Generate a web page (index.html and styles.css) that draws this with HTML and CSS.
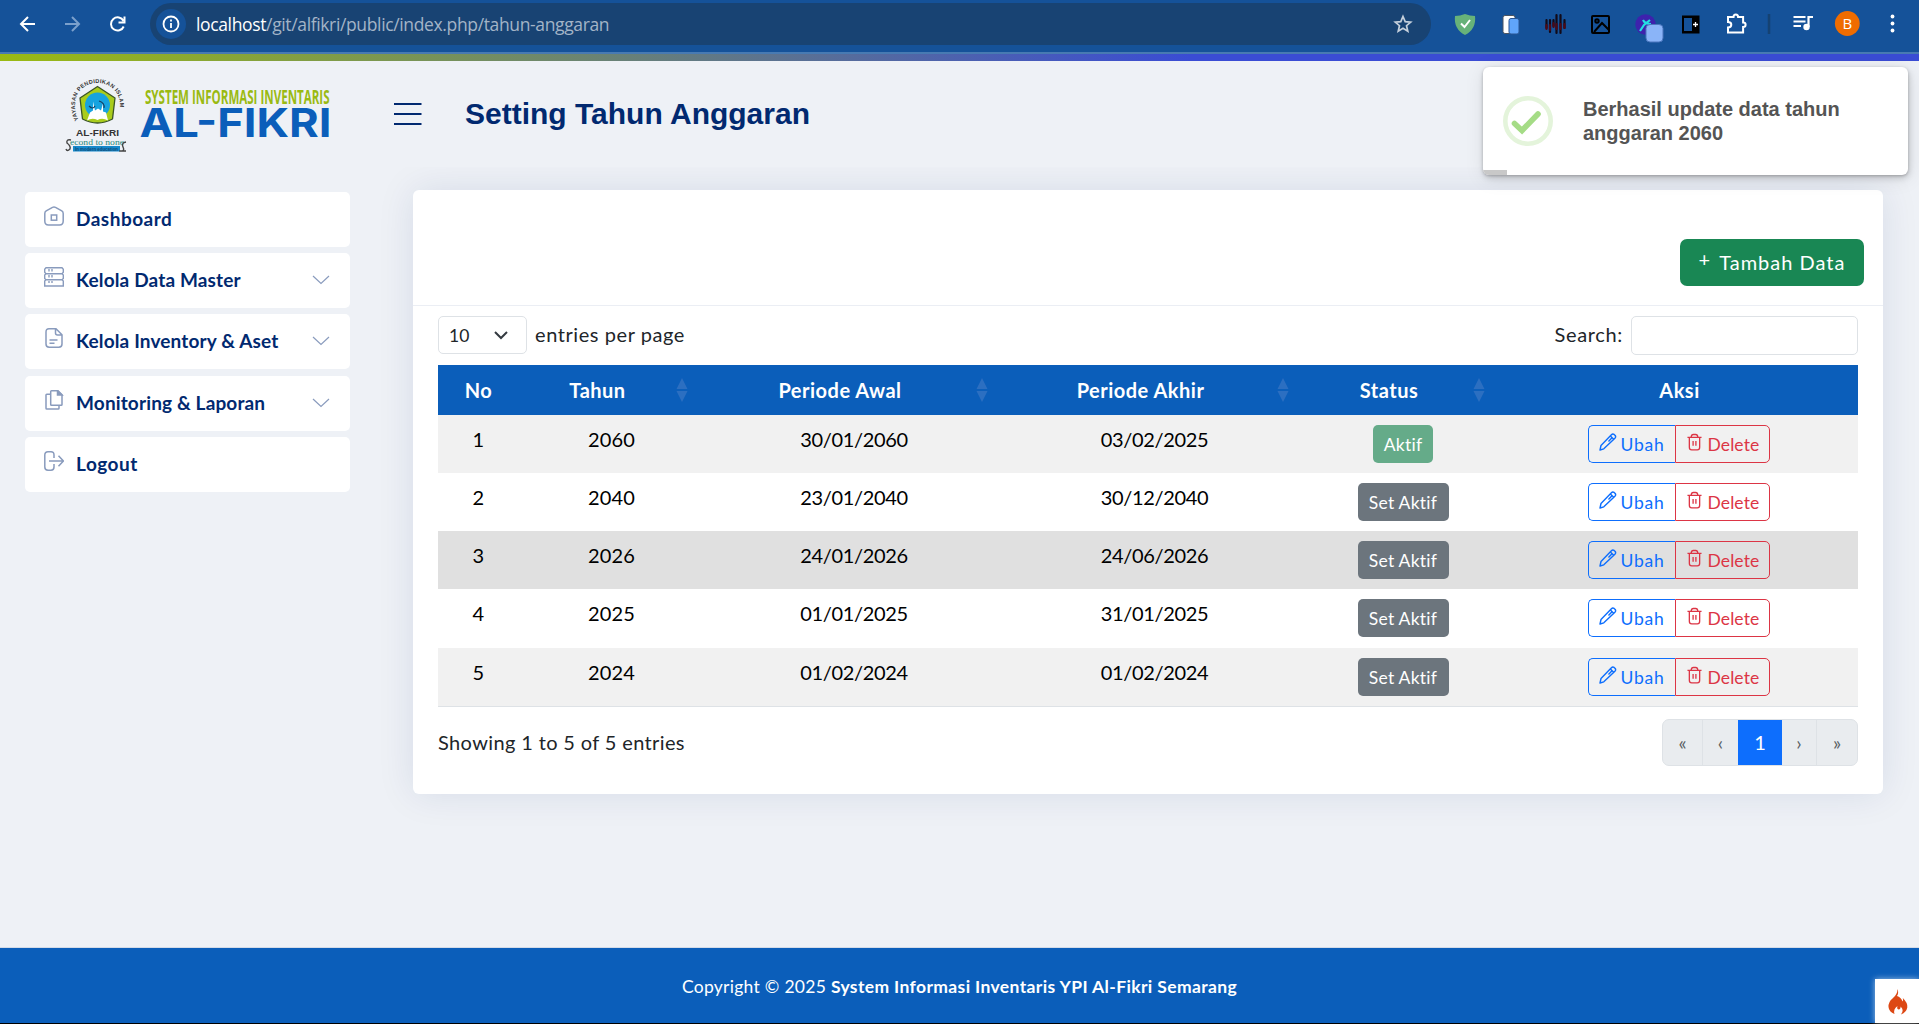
FILE: index.html
```html
<!DOCTYPE html>
<html lang="id">
<head>
<meta charset="utf-8">
<title>Setting Tahun Anggaran</title>
<link rel="stylesheet" href="styles.css">
</head>
<body>
<svg width="0" height="0" class="defs">
  <symbol id="pen" viewBox="0 0 18 18"><g fill="none" stroke="currentColor" stroke-width="1.4" stroke-linejoin="round"><path d="M12.400 1.700q1.300-1.300 2.700-.3l1.100 1.100q1 1.400-.3 2.700L4.800 15.800 1 17 2 12.500z"/><path d="M11.400 3.100 14.700 6.300M13.200 4.600 9.500 8.400"/></g></symbol>
  <symbol id="trash" viewBox="0 0 16 18"><g fill="none" stroke="currentColor" stroke-width="1.4"><path d="M.5 4h15M4.300 4q.4-3 2.500-3h2.400q2.100 0 2.500 3M2.500 4v10.500q0 2.800 2.500 2.800h6q2.500 0 2.500-2.800V4M6.500 8v5M9.500 8v5"/></g></symbol>
  <symbol id="chev" viewBox="0 0 18 10"><path d="M1 1l8 7.500L17 1" fill="none" stroke="currentColor" stroke-width="1.200"/></symbol>
  <symbol id="sort" viewBox="0 0 12 24"><path fill="currentColor" d="M6 0l5.500 11H.5zM6 24l5.500-11H.5z"/></symbol>
</svg>

<div class="browser">
  <svg class="nav" width="150" height="48" viewBox="0 0 150 48" fill="none" stroke="#fff" stroke-width="2">
    <path d="M35 24H21.500M28 17l-7 7 7 7"/>
    <path d="M65 24h13.500M72 17l7 7-7 7" stroke="#7ba0cc"/>
    <path d="M123.500 21a6.600 6.600 0 1 0 .2 5.500M124.500 16.500v6h-6"/>
  </svg>
  <div class="url">
    <span class="info"><svg width="18" height="18" viewBox="0 0 18 18" fill="none" stroke="#fff" stroke-width="1.800"><circle cx="9" cy="9" r="7.500"/><path d="M9 8v5M9 4.600v2"/></svg></span>
    <span class="address"><b>localhost</b>/git/alfikri/public/index.php/tahun-anggaran</span>
    <svg class="star" width="20" height="20" viewBox="0 0 20 20"><path d="M10 2.500l2.200 5.100 5.500.5-4.200 3.600 1.300 5.500-4.800-2.900-4.800 2.900 1.300-5.500L2.300 8.100l5.500-.5z" fill="none" stroke="#c5d0dc" stroke-width="1.700"/></svg>
  </div>
  <svg class="ext" width="488" height="48" viewBox="1431 0 488 48">
    <path d="M1465 14q5 2 10 2 1.500 13-10 19-11.500-6-10-19 5 0 10-2z" fill="#67b279"/>
    <path d="M1461 23.500l3.500 3.500 5.500-7" fill="none" stroke="#fff" stroke-width="2"/>
    <rect x="1503" y="15.500" width="12" height="18" rx="2" fill="#fff" stroke="#4d5560"/>
    <rect x="1509" y="18.500" width="10" height="15.500" rx="2" fill="#60a5fa" stroke="#285593"/>
    <g stroke-width="2.200" stroke-linecap="round"><path stroke="#120a18" d="M1546.500 20v8M1550 20v12M1553.500 20v6M1556.500 15v18M1560.500 15v18M1564.500 20v8"/><path stroke="#4b0918" d="M1546.500 25v4M1550 25v5M1553.500 23v4M1556.500 24v5M1560.500 24v5M1564.500 24v4"/></g>
    <g fill="none" stroke="#000" stroke-width="2"><rect x="1592" y="16" width="17" height="17" rx="1"/><circle cx="1597" cy="21" r="1.700"/><path d="M1594 32l8-9 7 7"/></g>
    <circle cx="1645.500" cy="24.500" r="10.200" fill="#3d22ad"/><path d="M1640 31l4-6 6-5M1643 20q2 4 8 4" stroke="#23dfe2" stroke-width="2.200" fill="none"/>
    <rect x="1646" y="24.500" width="17" height="17.500" rx="4" fill="#8ab4f8" stroke="#4a75bd"/>
    <path d="M1682 15.500h17.500v18H1682zM1684 18v13h8V18z" fill="#000" fill-rule="evenodd"/><path d="M1693 24.500h5M1695.500 22v5" stroke="#fff" stroke-width="1.300"/>
    <path d="M1728 17h5.500q0-2.500 2.300-2.500t2.300 2.500h5v5.500q2.500 0 2.500 2.200t-2.500 2.200v5.600H1728v-5q3.300 0 3.300-2.700t-3.300-2.700z" fill="none" stroke="#fff" stroke-width="2"/>
    <path d="M1769 14v20" stroke="#154272" stroke-width="2.500"/>
    <path d="M1793.500 17h12M1793.500 21.500h12M1793.500 26h7.500" stroke="#fff" stroke-width="2"/><path d="M1813 17h-4.500v10" stroke="#fff" stroke-width="2.200" fill="none"/><circle cx="1806.500" cy="27" r="3.200" fill="#fff"/>
    <circle cx="1847.300" cy="23.500" r="12.400" fill="#ef6c00"/><text x="1847.300" y="29" text-anchor="middle" fill="#fff" class="initial">B</text>
    <g fill="#fff"><circle cx="1892.500" cy="16.500" r="1.900"/><circle cx="1892.500" cy="23.500" r="1.900"/><circle cx="1892.500" cy="30.500" r="1.900"/></g>
  </svg>
</div>
<div class="stripe"></div>

<header class="header">
  <svg class="logo" width="280" height="80" viewBox="60 73 280 80">
    <defs><path id="arc" d="M78.500 119C69 99 80 82 97.500 82S126 99 116.500 119"/></defs>
    <text class="arc-text"><textPath href="#arc" textLength="88">YAYASAN PENDIDIKAN ISLAM</textPath></text>
    <path d="M97.500 85.500l17.500 11.500-2.500 21q-15 8-30 0L80 97z" fill="#a9cc1c" stroke="#3b5526" stroke-width="1.300" stroke-linejoin="round"/>
    <circle cx="97.500" cy="104" r="12.500" fill="#17a3df"/>
    <path d="M87 119.500q5-3 10.500-.5 5-2.500 10.500.5l-2-8-3-1v-8l-2 7-3-2-3 2-2-9v9l-3 2z" fill="#fff"/>
    <path d="M89 105q4 4 6 0M99 100q6 2 5 7" fill="none" stroke="#183e61" stroke-width="1.200"/>
    <text x="76" y="134.500" class="mark" textLength="43" lengthAdjust="spacingAndGlyphs">AL-FIKRI</text>
    <text x="70" y="144" class="motto" textLength="54" lengthAdjust="spacingAndGlyphs">econd to none</text>
    <rect x="73" y="145" width="47" height="5.500" fill="#168acb"/>
    <text x="75" y="149.500" class="tiny" textLength="43" lengthAdjust="spacingAndGlyphs">In modern education</text>
    <path d="M71 139q-5-1-4 3 4 3 3 6-3 3-4 0M126 141q-5 1-3 5t-2 4 5 0" stroke="#444" fill="none" stroke-width="1.400"/>
    <text x="145" y="102.500" class="sys" textLength="184.500" lengthAdjust="spacingAndGlyphs">SYSTEM INFORMASI INVENTARIS</text>
    <text x="139.500" y="136" class="brand" textLength="192" lengthAdjust="spacingAndGlyphs">AL-FIKRI</text>
  </svg>
  <svg class="burger" width="28" height="24" viewBox="0 0 28 24"><path d="M0 2h27.500M0 12h27.500M0 22h27.500" stroke="#012970" stroke-width="2"/></svg>
  <h1>Setting Tahun Anggaran</h1>
</header>

<div class="main">
  <nav class="sidebar">
    <a><svg width="20" height="20" viewBox="0 0 20 20" fill="none" stroke="currentColor" stroke-width="1.500"><path d="M.8 7.500q0-1.700 1.400-2.600L8.500 1.300q1.500-.8 3 0l6.300 3.600q1.400.9 1.400 2.600V15q0 4-3.700 4h-11Q.8 19 .8 15z"/><rect x="7.300" y="9" width="5.400" height="5.200"/></svg><span class="wide">Dashboard</span></a>
    <a><svg width="20" height="20" viewBox="0 0 20 20" fill="none" stroke="currentColor" stroke-width="1.400"><path d="M2 .8h16l1.300 1.500v3L18 6.700H2L.7 5.300v-3zM2 6.700.7 8v3.500L2 12.700h16l1.300-1.200V8L18 6.700M2 12.700.7 14v5h18.600v-5L18 12.700M5 2v2.500M8 2v2.500M5 8v2.500M8 8v2.500M5 14v2M8 14v2"/></svg><span>Kelola Data Master</span><svg class="chev" width="18" height="10"><use href="#chev"/></svg></a>
    <a><svg width="20" height="20" viewBox="0 0 20 20" fill="none" stroke="currentColor" stroke-width="1.500"><path d="M5 .8h7l6 6V16q0 3.200-3.200 3.200H5.200Q2 19.200 2 16V4Q2 .8 5 .8zM11.500.8V5q0 2 2 2H18M5.500 12h8M5.500 15.300h5"/></svg><span>Kelola Inventory &amp; Aset</span><svg class="chev" width="18" height="10"><use href="#chev"/></svg></a>
    <a><svg width="20" height="20" viewBox="0 0 20 20" fill="none" stroke="currentColor" stroke-width="1.500"><path d="M7.500.8H14l4 4V14.500q0 .8-.8.800H7.500q-.8 0-.8-.8V1.600q0-.8.800-.8zM6.500 4.300H2.800q-.8 0-.8.800v13.200q0 .8.800.8h11.400q.8 0 .8-.8v-3"/><path d="M13.500.8V5H18z" fill="currentColor"/></svg><span>Monitoring &amp; Laporan</span><svg class="chev" width="18" height="10"><use href="#chev"/></svg></a>
    <a><svg width="20" height="20" viewBox="0 0 20 20" fill="none" stroke="currentColor" stroke-width="1.500"><path d="M10 7V4q0-3.200-3-3.200H4Q.8.800.8 4v12q0 3.200 3.200 3.200h3q3 0 3-3.200v-3M5 10h14.300M14.500 4.800 19.400 10l-4.900 5.200"/></svg><span class="wide">Logout</span></a>
  </nav>

  <section class="card">
    <div class="card-head"><button class="add"><i>+</i>Tambah Data</button></div>
    <div class="tools">
      <span class="select">10<svg width="14" height="9" viewBox="0 0 14 9"><path d="M1 1l6 6 6-6" fill="none" stroke="#343a40" stroke-width="2"/></svg></span>
      <span class="per">entries per page</span>
      <span class="search-label">Search:</span><input class="search">
    </div>
    <table>
      <colgroup><col class="c1"><col class="c2"><col class="c3"><col class="c4"><col class="c5"><col class="c6"></colgroup>
      <thead><tr><th>No</th>
        <th><div class="sortable">Tahun<svg width="12" height="24"><use href="#sort"/></svg></div></th>
        <th><div class="sortable">Periode Awal<svg width="12" height="24"><use href="#sort"/></svg></div></th>
        <th><div class="sortable">Periode Akhir<svg width="12" height="24"><use href="#sort"/></svg></div></th>
        <th><div class="sortable">Status<svg width="12" height="24"><use href="#sort"/></svg></div></th>
        <th>Aksi</th></tr></thead>
      <tbody>
        <tr class="odd"><td>1</td><td>2060</td><td class="date">30/01/2060</td><td class="date">03/02/2025</td><td><button class="btn on">Aktif</button></td><td><div class="group"><button class="edit"><svg width="18" height="18"><use href="#pen"/></svg>Ubah</button><button class="del"><svg width="15" height="18"><use href="#trash"/></svg>Delete</button></div></td></tr>
        <tr><td>2</td><td>2040</td><td class="date">23/01/2040</td><td class="date">30/12/2040</td><td><button class="btn">Set Aktif</button></td><td><div class="group"><button class="edit"><svg width="18" height="18"><use href="#pen"/></svg>Ubah</button><button class="del"><svg width="15" height="18"><use href="#trash"/></svg>Delete</button></div></td></tr>
        <tr class="hover"><td>3</td><td>2026</td><td class="date">24/01/2026</td><td class="date">24/06/2026</td><td><button class="btn">Set Aktif</button></td><td><div class="group"><button class="edit"><svg width="18" height="18"><use href="#pen"/></svg>Ubah</button><button class="del"><svg width="15" height="18"><use href="#trash"/></svg>Delete</button></div></td></tr>
        <tr class="tall"><td>4</td><td>2025</td><td class="date">01/01/2025</td><td class="date">31/01/2025</td><td><button class="btn">Set Aktif</button></td><td><div class="group"><button class="edit"><svg width="18" height="18"><use href="#pen"/></svg>Ubah</button><button class="del"><svg width="15" height="18"><use href="#trash"/></svg>Delete</button></div></td></tr>
        <tr class="odd"><td>5</td><td>2024</td><td class="date">01/02/2024</td><td class="date">01/02/2024</td><td><button class="btn">Set Aktif</button></td><td><div class="group"><button class="edit"><svg width="18" height="18"><use href="#pen"/></svg>Ubah</button><button class="del"><svg width="15" height="18"><use href="#trash"/></svg>Delete</button></div></td></tr>
      </tbody>
    </table>
    <div class="bottom"><span class="summary">Showing 1 to 5 of 5 entries</span>
      <div class="pages"><a class="p1">«</a><a class="p2">‹</a><a class="active">1</a><a class="p2 n">›</a><a class="p1 l">»</a></div>
    </div>
  </section>
</div>

<footer class="footer">Copyright © 2025&nbsp;<b>System Informasi Inventaris YPI Al-Fikri Semarang</b></footer>

<div class="toast">
  <svg width="50" height="50" viewBox="0 0 50 50"><circle cx="25" cy="25" r="22.700" fill="none" stroke="#e4f4db" stroke-width="4.600"/><path d="M11.500 27.500l7.500 7L35 18" fill="none" stroke="#a5dc86" stroke-width="5.600" stroke-linecap="round"/></svg>
  <p>Berhasil update data tahun anggaran 2060</p>
  <div class="progress"></div>
</div>
<div class="debug"><svg width="20" height="26" viewBox="0 0 20 26"><path d="M9.500 0Q11 4 9 7 13 8 14.500 12.500 15.700 11 14.800 9 20 14 19.300 18.500 18.500 23 13 25.500 16.500 21 12.500 17.500 13 20 10.500 20.500 8.500 20 9.500 17 5 20 6.500 25 1 23 .5 18 .2 13 4.500 9.500 9.500 5.500 9.500 0z" fill="#dd4814"/></svg></div>
</body>
</html>
```
FILE: styles.css
```css
* { box-sizing: border-box; }
body { margin: 0; height: 1024px; overflow: hidden; display: flex; flex-direction: column; background: #eef1f6; color: #212529; font: 20px "Lato", "Open Sans", sans-serif; position: relative; }
button { font: inherit; margin: 0; }
.defs { position: absolute; }

.browser { flex: none; height: 54px; background: #155299; border-bottom: 2px solid #487ab2; display: flex; align-items: flex-start; }
.nav { flex: none; }
.url { flex: 1; height: 42px; margin-top: 3px; border-radius: 21px; background: #184373; display: flex; align-items: center; padding: 0 18px 0 6px; }
.info { width: 30px; height: 30px; border-radius: 50%; background: #155299; display: flex; align-items: center; justify-content: center; }
.address { margin-left: 10px; font: 17.5px "Open Sans", sans-serif; letter-spacing: -.36px; color: #a3b4c7; flex: 1; }
.address b { font-weight: 400; color: #fff; }
.ext { flex: none; }
.initial { font: 15px "Open Sans", sans-serif; }
.stripe { flex: none; height: 7px; background: linear-gradient(90deg, #9aba12, #3a4cd4 62%); }

.header { flex: none; height: 106px; background: #eef1f6; display: flex; align-items: center; padding: 0 0 0 60px; z-index: 1; }
.logo { flex: none; margin-top: -1px; overflow: visible; }
.arc-text { font: bold 5.600px "Liberation Sans", sans-serif; fill: #333; }
.mark { font: bold 8.500px "Liberation Sans", sans-serif; fill: #333; }
.motto { font: 9px "Liberation Serif", serif; fill: #2b8a7c; }
.tiny { font: bold 5px "Liberation Sans", sans-serif; fill: #124a78; }
.sys { font: bold 19px "Open Sans", sans-serif; fill: #9aba12; }
.brand { font: bold 40px "Inter", sans-serif; fill: #0b5eba; }
.burger { margin-left: 54px; }
h1 { margin: 0 0 0 43px; font: bold 30px "Liberation Sans", Arial, sans-serif; color: #012970; }

.main { flex: 1; display: flex; align-items: flex-start; padding: 23px 36px 0 25px; gap: 63px; }
.sidebar { width: 325px; flex: none; display: flex; flex-direction: column; gap: 6.200px; padding-top: 2px; }
.sidebar a { height: 55px; background: #fff; border-radius: 5px; display: flex; align-items: center; padding: 0 20px 2px 19px; color: #899bbd; }
.sidebar a > svg:first-child { margin-top: -5px; }
.sidebar .chev { margin-top: 1px; }
.sidebar span { margin-left: 12px; flex: 1; font-weight: 700; font-size: 19px; letter-spacing: .15px; color: #012970; }
.sidebar .wide { letter-spacing: .5px; }

.card { flex: 1; height: 604px; background: #fff; border-radius: 6px; box-shadow: 0 0 37px rgba(1, 41, 112, .1); }
.card-head { height: 116px; border-bottom: 1px solid #ebeef4; padding: 49px 19px 0 0; display: flex; justify-content: flex-end; align-items: flex-start; }
.add { width: 184px; height: 47px; border: 0; border-radius: 7px; background: #198754; color: #fff; padding: 0 0 2px; letter-spacing: 1px; }
.add i { font-style: normal; margin-right: 8px; position: relative; top: -3px; }
.tools { height: 59px; padding: 10px 25px 0; display: flex; align-items: flex-start; line-height: 36px; }
.select { width: 89px; height: 38px; border: 1px solid #dee2e6; border-radius: 5px; display: flex; align-items: center; justify-content: space-between; padding: 1px 18px 0 10px; font-size: 17.500px; }
.per { margin-left: 8px; letter-spacing: .57px; }
.search-label { margin-left: auto; letter-spacing: .65px; }
.search { width: 227px; height: 39px; margin-left: 8px; border: 1px solid #dee2e6; border-radius: 5px; background: #fff; }

table { width: 1420px; margin: 0 25px; table-layout: fixed; border-collapse: separate; border-spacing: 0; color: #000; border-bottom: 1px solid #dee2e6; text-align: center; }
.c1 { width: 81px; } .c2 { width: 185px; } .c3 { width: 300px; } .c4 { width: 301px; } .c5 { width: 196px; } .c6 { width: 357px; }
th { height: 50px; background: #0b5eba; color: #fff; padding: 0 0 1px; letter-spacing: .5px; }
.sortable { position: relative; padding-right: 28px; }
.sortable svg { position: absolute; right: 16px; top: 0; color: #2c6fc1; }
td { height: 58px; padding: 10px 0; vertical-align: top; line-height: 28px; letter-spacing: .2px; }
.date { letter-spacing: -.35px; }
.tall td { height: 59px; }
.odd td { background: #f1f1f1; }
.hover td { background: #e0e0e0; }
.btn { display: block; width: 91px; height: 38px; margin: 0 auto; border: 0; border-radius: 5px; background: #6c757d; color: #fff; font-size: 17.500px; letter-spacing: .25px; padding: 1px 0 0; }
.on { width: 60px; background: #65ab89; }
.group { display: flex; justify-content: center; font-size: 17.500px; padding-right: 2px; }
.group button { height: 38px; background: transparent; border: 1px solid #0d6efd; color: #0d6efd; display: flex; align-items: center; padding: 1px 0 0 10px; letter-spacing: .1px; }
.group svg { margin: -6px 4px 0 0; }
.group .edit { width: 87px; border-right: 0; border-radius: 5px 0 0 5px; letter-spacing: .8px; }
.group .del { width: 95px; border-color: #dc3545; color: #dc3545; padding-left: 11px; border-radius: 0 5px 5px 0; }
.group .del svg { margin-right: 6px; }

.bottom { display: flex; justify-content: space-between; align-items: center; height: 47px; margin: 12px 25px 0; }
.summary { letter-spacing: .37px; padding-bottom: 2px; }
.pages { display: flex; height: 47px; border: 1px solid #dee2e6; border-radius: 7px; background: #e9ecef; color: #595f64; overflow: hidden; width: 196px; }
.pages a { display: flex; flex: none; align-items: center; justify-content: center; }
.pages .p1 { width: 40px; border-right: 1px solid #dee2e6; font-size: 19px; }
.pages .p2 { width: 35px; font-size: 19px; }
.pages .n { border-right: 1px solid #dee2e6; }
.pages .l { border: 0; }
.pages .active { width: 44px; margin: -1px 0; background: #0d6efd; color: #fff; padding-bottom: 2px; }

.footer { flex: none; height: 77px; background: #0b5eba; border-top: 1px solid #d3dbe8; border-bottom: 1px solid #000; color: #fff; font-size: 17.500px; letter-spacing: .28px; display: flex; align-items: center; justify-content: center; padding-top: 1px; }
.footer b { font-weight: 700; letter-spacing: .37px; }

.toast { position: absolute; z-index: 2; left: 1483px; top: 67px; width: 425px; height: 108px; border-radius: 6px; background: #fff; box-shadow: 0 1px 3px rgba(0,0,0,.2), 1px 3px 6px rgba(0,0,0,.15), 1px 3px 20px rgba(0,0,0,.1); display: flex; align-items: center; padding-left: 20px; overflow: hidden; }
.toast p { margin: 0 0 0 30px; width: 290px; font: bold 20px/24px "Liberation Sans", Arial, sans-serif; color: #545454; }
.progress { position: absolute; left: 0; bottom: 0; width: 24px; height: 5px; background: #c8c8c8; }
.debug { position: absolute; z-index: 3; right: 0; bottom: 1px; width: 44px; height: 44px; background: #fff; box-shadow: 0 0 6px rgba(255,255,255,.6); padding: 10px 0 0 13px; }
```
